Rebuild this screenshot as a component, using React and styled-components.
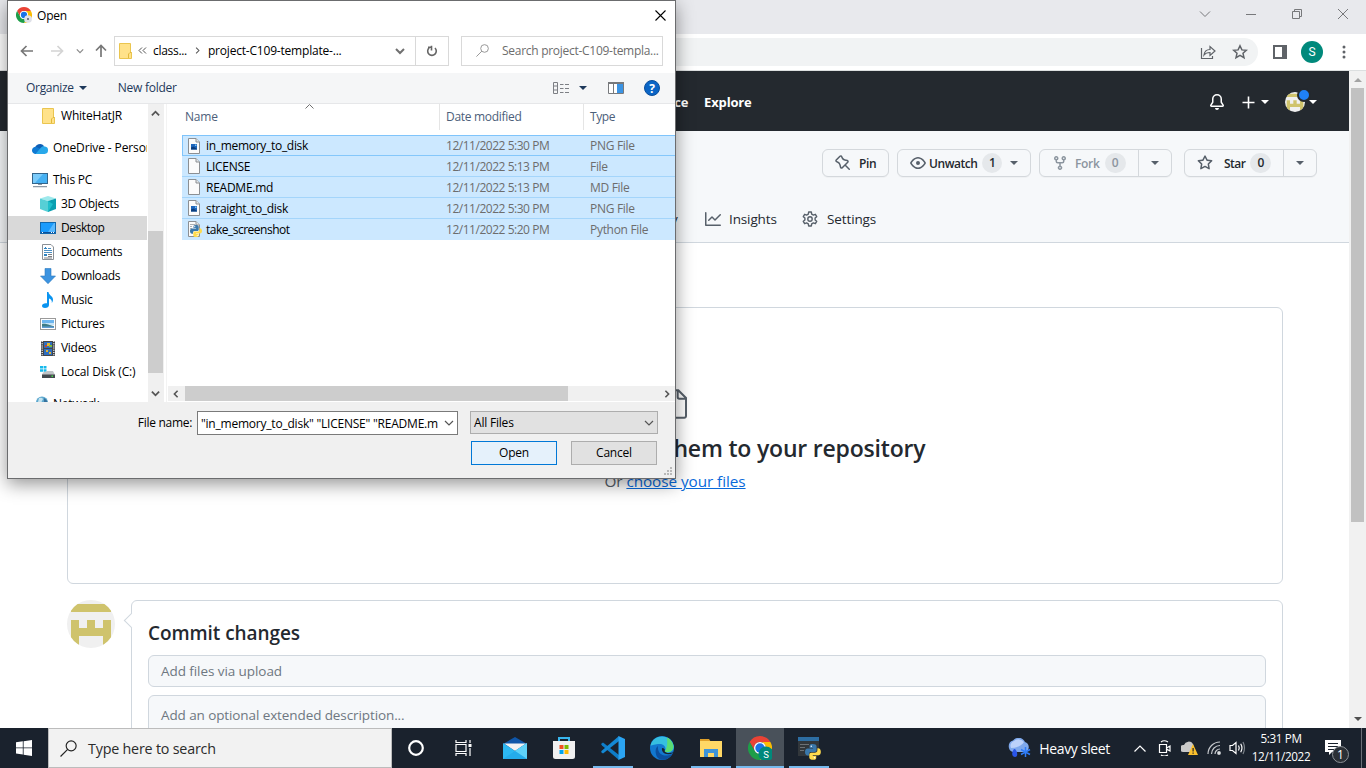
import React from 'react';
import styled, { createGlobalStyle, css } from 'styled-components';

const Global = createGlobalStyle`
  * { box-sizing: border-box; }
  html, body { margin: 0; height: 768px; overflow: hidden; background: #fff; }
  body { font-family: "Open Sans", "Noto Sans", sans-serif; font-size: 12px; color: #000; }
  svg { display: block; flex: none; }
`;

const spaced = css`
  white-space: nowrap;
  letter-spacing: ${p => p.$ls ?? -0.2}px;
`;

const Screen = styled.div`
  position: relative;
  width: 1366px;
  height: 768px;
  display: flex;
  flex-direction: column;
  overflow: hidden;
`;

/* ---------- browser ---------- */
const Browser = styled.div`
  height: 728px;
  display: flex;
  flex-direction: column;
`;
const TabStrip = styled.div`
  height: 34px;
  flex: none;
  background: #e8e9ed;
  display: flex;
  justify-content: flex-end;
  align-items: center;
  gap: 34px;
  padding: 0 17px 6px 0;
`;
const Toolbar = styled.div`
  height: 37px;
  flex: none;
  background: #fff;
  border-bottom: 1px solid #dcdfe0;
  display: flex;
  align-items: center;
  padding: 0 19px 0 100px;
`;
const Omnibox = styled.div`
  flex: 1;
  height: 28px;
  border-radius: 0 14px 14px 0;
  background: #f1f3f4;
  display: flex;
  justify-content: flex-end;
  align-items: center;
  gap: 16px;
  padding-right: 10px;
`;
const ToolbarActions = styled.div`
  width: 89px;
  display: flex;
  align-items: center;
  padding-left: 15px;
`;
const Profile = styled.div`
  width: 22px;
  height: 22px;
  margin: 0 19px 0 14px;
  border-radius: 50%;
  background: #00897b;
  color: #fff;
  font: 12px/22px Roboto, sans-serif;
  text-align: center;
`;
const Viewport = styled.div`
  flex: 1;
  min-height: 0;
  display: flex;
`;
const Page = styled.div`
  width: 1349px;
  overflow: hidden;
  background: #fff;
`;
const PageScroll = styled.div`
  width: 17px;
  background: #f1f1f1;
  display: flex;
  flex-direction: column;
  align-items: center;
  padding: 7px 0 7px 1px;
  justify-content: space-between;
`;
const PageThumb = styled.div`
  width: 13px;
  height: 434px;
  margin: 6px 1px auto 0;
  background: #c1c1c1;
`;

/* ---------- repository page ---------- */
const SiteHeader = styled.header`
  height: 60px;
  background: #24292f;
  color: #fff;
  display: flex;
  align-items: center;
  justify-content: space-between;
  padding: 2px 32px 0 609px;
`;
const SiteLinks = styled.nav`
  display: flex;
  gap: 16px;
`;
const SiteLink = styled.span`
  font-size: 13px;
  font-weight: 700;
  line-height: 20px;
  ${spaced}
`;
const SiteActions = styled.div`
  display: flex;
  align-items: center;
`;
const Caret = styled.i`
  width: 0;
  height: 0;
  border: 4px solid transparent;
  border-top-color: ${p => p.$c || '#57606a'};
  border-bottom: 0;
  margin-left: ${p => p.$ml || 0}px;
`;
const AvatarWrap = styled.div`
  position: relative;
  margin-left: 16px;
`;
const StatusDot = styled.i`
  position: absolute;
  left: 12px;
  top: -4px;
  width: 14px;
  height: 14px;
  border-radius: 50%;
  background: #1f80f5;
  border: 2px solid #24292f;
`;
const RepoHead = styled.div`
  height: 112px;
  background: #f6f8fa;
  border-bottom: 1px solid #d0d7de;
`;
const RepoActions = styled.div`
  display: flex;
  justify-content: flex-end;
  padding: 18px 32px 0 0;
`;
const RepoButton = styled.div`
  height: 28px;
  width: ${p => p.$w}px;
  margin-left: ${p => p.$ml ?? 8}px;
  border: 1px solid #d4d8dc;
  border-radius: 6px;
  background: #f6f8fa;
  box-shadow: 0 1px 0 rgba(27,31,36,.03);
  color: ${p => (p.$muted ? '#8c959f' : '#24292f')};
  display: flex;
  align-items: center;
  padding-left: 12px;
  svg { color: ${p => (p.$muted ? '#8c959f' : '#57606a')}; }
`;
const ButtonLabel = styled.span`
  font-size: 12px;
  font-weight: 600;
  margin-left: ${p => p.$ml}px;
  ${spaced}
`;
const Counter = styled.span`
  width: ${p => p.$w || 21}px;
  height: 20px;
  border-radius: 10px;
  background: #e5e8eb;
  font-size: 12px;
  font-weight: 600;
  line-height: 20px;
  text-align: center;
  margin-left: 5px;
`;
const SplitCaret = styled.div`
  margin-left: auto;
  width: 33px;
  height: 26px;
  border-left: 1px solid #d4d8dc;
  display: flex;
  align-items: center;
  justify-content: center;
`;
const RepoTabs = styled.div`
  display: flex;
  align-items: center;
  height: 48px;
  margin-top: 18px;
  padding-left: 629px;
`;
const RepoTab = styled.div`
  display: flex;
  align-items: center;
  gap: ${p => p.$gap ?? 8}px;
  width: ${p => p.$w}px;
  font-size: 13.5px;
  color: #24292f;
  ${spaced}
  svg { color: #57606a; }
`;
const DropZone = styled.div`
  margin: 64px 66px 0 67px;
  height: 277px;
  border: 1px solid #d0d7de;
  border-radius: 6px;
  display: flex;
  flex-direction: column;
  align-items: center;
  padding-top: 80px;
  color: #57606a;
`;
const DropTitle = styled.h2`
  margin: 10px 0 0;
  font-size: 23px;
  line-height: 36px;
  font-weight: 600;
  color: #24292f;
  ${spaced}
`;
const DropHint = styled.p`
  margin: 0;
  font-size: 15.3px;
  line-height: 30px;
  ${spaced}
  span { color: #0969da; text-decoration: underline; }
`;
const CommitRow = styled.div`
  display: flex;
  margin: 16px 66px 0 67px;
`;
const CommitBox = styled.div`
  position: relative;
  flex: 1;
  margin-left: 16px;
  height: 260px;
  border: 1px solid #d0d7de;
  border-radius: 6px;
  padding: 17px 16px 0;
  &::before {
    content: '';
    position: absolute;
    left: -6px;
    top: 14px;
    width: 10px;
    height: 10px;
    background: #fff;
    border-left: 1px solid #d0d7de;
    border-bottom: 1px solid #d0d7de;
    transform: rotate(45deg);
  }
`;
const CommitTitle = styled.h3`
  margin: 0 0 6px;
  font-size: 19px;
  line-height: 31px;
  font-weight: 600;
  color: #24292f;
  ${spaced}
`;
const Field = styled.div`
  height: ${p => p.$h}px;
  border: 1px solid #d0d7de;
  border-radius: 6px;
  background: #f6f8fa;
  padding: ${p => p.$pt}px 12px 0;
  margin-bottom: 8px;
  font-size: 13.5px;
  line-height: 20px;
  color: #6e7781;
  ${spaced}
`;

/* ---------- file dialog ---------- */
const Dialog = styled.div`
  position: absolute;
  left: 7px;
  top: 0;
  width: 669px;
  height: 479px;
  background: #fff;
  border: 1px solid #6b6c6e;
  box-shadow: 0 5px 17px rgba(0,0,0,.42);
  display: flex;
  flex-direction: column;
  font-size: 12px;
`;
const TitleBar = styled.div`
  height: 30px;
  display: flex;
  align-items: center;
  padding: 0 9px 2px 8px;
  ${spaced}
`;
const TitleText = styled.span`
  flex: 1;
  margin-left: 5px;
`;
const NavBar = styled.div`
  height: 42px;
  display: flex;
  align-items: center;
  padding: 0 12px 2px 12px;
`;
const NavArrows = styled.div`
  width: 94px;
  display: flex;
  align-items: center;
`;
const AddressBar = styled.div`
  width: 335px;
  height: 30px;
  border: 1px solid #d9d9d9;
  display: flex;
  align-items: center;
  padding: 0 0 1px 2px;
`;
const Crumb = styled.span`
  margin-left: ${p => p.$ml}px;
  ${spaced}
`;
const Refresh = styled.div`
  width: 33px;
  height: 28px;
  border-left: 1px solid #d9d9d9;
  display: flex;
  align-items: center;
  justify-content: center;
`;
const SearchBox = styled.div`
  width: 202px;
  height: 30px;
  margin-left: 12px;
  border: 1px solid #d9d9d9;
  display: flex;
  align-items: center;
  padding: 0 0 1px 14px;
  color: #6d6d6d;
  gap: 13px;
  ${spaced}
`;
const CommandBar = styled.div`
  height: 31px;
  background: #f5f6f7;
  border-bottom: 1px solid #e6e7e9;
  display: flex;
  align-items: center;
  padding: 0 15px 0 18px;
  color: #1e395b;
`;
const Command = styled.span`
  padding-bottom: 1px;
  margin: 0 ${p => p.$mr}px 0 ${p => p.$ml || 0}px;
  ${spaced}
`;
const DialogBody = styled.div`
  height: 298px;
  display: flex;
  overflow: hidden;
`;
const Tree = styled.div`
  width: 140px;
  overflow: hidden;
`;
const TreeItem = styled.div`
  height: 24px;
  width: 139px;
  display: flex;
  align-items: center;
  padding-left: ${p => (p.$root ? 24 : 32)}px;
  margin-top: ${p => p.$mt || 0}px;
  gap: 5px;
  overflow: hidden;
  background: ${p => (p.$on ? '#d9d9d9' : 'transparent')};
  ${spaced}
`;
const TreeLabel = styled.span`
  padding-bottom: 2px;
`;
const TreeScroll = styled.div`
  width: 16px;
  background: #f0f0f0;
  display: flex;
  flex-direction: column;
  align-items: center;
  padding: 5px 2px 4px 0;
`;
const TreeThumb = styled.div`
  width: 15px;
  height: 142px;
  margin: 113px -1px auto 0;
  background: #cdcdcd;
`;
const FileArea = styled.div`
  flex: 1;
  min-width: 0;
  margin-left: 2px;
  border-left: 1px solid #f3f3f3;
  display: flex;
  flex-direction: column;
  overflow: hidden;
`;
const Columns = styled.div`
  position: relative;
  height: 26px;
  margin: 0 0 5px 15px;
  display: flex;
  color: #4c607a;
`;
const Column = styled.div`
  width: ${p => p.$w}px;
  flex: none;
  padding-left: ${p => p.$pl}px;
  border-right: 1px solid #e5e5e5;
  line-height: 26px;
  ${spaced}
`;
const SortMark = styled.div`
  position: absolute;
  left: 123px;
  top: 0;
`;
const FileRow = styled.div`
  height: 21px;
  margin-left: 15px;
  display: flex;
  align-items: center;
  background: #cce8ff;
  border: ${p => (p.$focus ? '1px solid #7fc4fb' : '0 solid')};
  border-right: 0;
  border-bottom: 1px solid ${p => (p.$focus ? '#84c7fb' : p.$last ? '#cce8ff' : '#a4d5fb')};
  padding-left: ${p => (p.$focus ? 3 : 4)}px;
  color: #6d6d6d;
`;
const FileName = styled.span`
  width: 244px;
  flex: none;
  padding-left: 4px;
  color: #000;
  ${spaced}
`;
const FileMeta = styled.span`
  width: ${p => p.$w}px;
  flex: none;
  ${spaced}
`;
const HScroll = styled.div`
  margin: auto 0 1px 1px;
  height: 15px;
  background: #f0f0f0;
  display: flex;
  align-items: center;
  padding: 0 4px 0 4px;
`;
const HThumb = styled.div`
  width: 383px;
  height: 15px;
  margin: 0 auto 0 5px;
  background: #cdcdcd;
`;
const DialogFooter = styled.div`
  position: relative;
  flex: 1;
  background: #f0f0f0;
  padding: 9px 17px 0 0;
`;
const FooterRow = styled.div`
  display: flex;
  justify-content: flex-end;
  align-items: flex-start;
`;
const FieldName = styled.span`
  line-height: 24px;
  margin-right: 5px;
  ${spaced}
`;
const NameInput = styled.div`
  width: 261px;
  height: 24px;
  border: 1px solid #7a7a7a;
  background: #fff;
  line-height: 23px;
  padding: 0 3px 0 3px;
  display: flex;
  align-items: center;
  justify-content: space-between;
  ${spaced}
`;
const TypeSelect = styled.div`
  width: 188px;
  height: 23px;
  margin-left: 12px;
  border: 1px solid #adadad;
  background: #e1e1e1;
  padding: 0 3px 0 3px;
  display: flex;
  align-items: center;
  justify-content: space-between;
  ${spaced}
`;
const DialogButton = styled.div`
  width: 86px;
  height: 24px;
  margin: 6px 1px 0 13px;
  border: 1px solid ${p => (p.$primary ? '#0078d7' : '#adadad')};
  background: ${p => (p.$primary ? '#e5f1fb' : '#e1e1e1')};
  line-height: 22px;
  text-align: center;
  ${spaced}
`;
const Grip = styled.svg`
  position: absolute;
  right: 2px;
  bottom: 2px;
`;

/* ---------- taskbar ---------- */
const Taskbar = styled.div`
  height: 40px;
  background: #1a222d;
  display: flex;
  align-items: center;
  color: #fff;
`;
const StartButton = styled.div`
  width: 48px;
  padding-left: 16px;
`;
const TaskSearch = styled.div`
  width: 344px;
  height: 40px;
  background: #f2f2f2;
  border: 1px solid #bcbcbc;
  color: #2b2b2b;
  display: flex;
  align-items: center;
  gap: 11px;
  padding-left: 11px;
  font-size: 14.3px;
  ${spaced}
`;
const TaskApp = styled.div`
  width: ${p => p.$w || 48}px;
  height: 40px;
  display: flex;
  align-items: center;
  justify-content: center;
  background: ${p => (p.$active ? '#49515a' : 'transparent')};
  box-shadow: ${p => (p.$run ? 'inset 0 -2px #76b9ed' : 'none')};
  margin: 0 ${p => p.$mr ?? p.$mx ?? 0}px 0 ${p => p.$mx || 0}px;
`;
const Tray = styled.div`
  margin-left: auto;
  height: 40px;
  display: flex;
  align-items: center;
  padding-right: 4px;
`;
const Weather = styled.span`
  font-size: 14px;
  margin: 0 24px 0 7px;
  ${spaced}
`;
const Clock = styled.div`
  width: 60px;
  margin-left: 5px;
  padding-bottom: 2px;
  text-align: center;
  font-size: 11.7px;
  line-height: 18px;
  ${spaced}
`;
const Notice = styled.div`
  position: relative;
  margin: 0 12px 0 14px;
  padding-top: 4px;
  width: 24px;
  height: 24px;
`;
const NoticeCount = styled.span`
  position: absolute;
  left: 7px;
  top: 10px;
  width: 17px;
  height: 17px;
  border-radius: 50%;
  border: 1px solid #8d9298;
  background: #2b3036;
  font-size: 12px;
  line-height: 15px;
  text-align: center;
`;
const PeekEdge = styled.i`
  height: 40px;
  border-left: 1px solid #6a7078;
`;

/* ---------- drawings ---------- */
const octicons = {
  bell: 'M8 16a2 2 0 001.985-1.750c.017-.137-.097-.25-.235-.25h-3.500c-.138 0-.252.113-.235.25A2 2 0 008 16zM8 1.500A3.500 3.500 0 004.500 5v2.947c0 .346-.102.683-.294.97l-1.703 2.556a.018.018 0 00-.003.01l.001.006c0 .002.002.004.004.006a.017.017 0 00.006.004l.007.001h10.964l.007-.001a.016.016 0 00.006-.004.016.016 0 00.004-.006l.001-.007a.017.017 0 00-.003-.01l-1.703-2.554a1.750 1.750 0 01-.294-.97V5A3.500 3.500 0 008 1.500zM3 5a5 5 0 0110 0v2.947c0 .05.015.098.042.139l1.703 2.555A1.518 1.518 0 0113.482 13H2.518a1.518 1.518 0 01-1.263-2.360l1.703-2.554A.25.25 0 003 7.947V5z',
  star: 'M8 .25a.75.75 0 01.673.418l1.882 3.815 4.210.612a.75.75 0 01.416 1.279l-3.046 2.970.719 4.192a.75.75 0 01-1.088.791L8 12.347l-3.766 1.980a.75.75 0 01-1.088-.79l.72-4.194L.818 6.374a.75.75 0 01.416-1.280l4.210-.611L7.327.668A.75.75 0 018 .25zm0 2.445L6.615 5.500a.75.75 0 01-.564.41l-3.097.45 2.240 2.184a.75.75 0 01.216.664l-.528 3.084 2.769-1.456a.75.75 0 01.698 0l2.770 1.456-.53-3.084a.75.75 0 01.216-.664l2.240-2.183-3.096-.45a.75.75 0 01-.564-.41L8 2.694v.001z',
  fork: 'M5 3.250a.75.75 0 11-1.500 0 .75.75 0 011.500 0zm0 2.122a2.250 2.250 0 10-1.500 0v.878A2.250 2.250 0 005.750 8.500h1.500v2.128a2.251 2.251 0 101.500 0V8.500h1.500a2.250 2.250 0 002.250-2.250v-.878a2.250 2.250 0 10-1.500 0v.878a.75.75 0 01-.75.75h-4.500A.75.75 0 015 6.250v-.878zm3.750 7.378a.75.75 0 11-1.500 0 .75.75 0 011.500 0zm3-8.750a.75.75 0 100-1.500.75.75 0 000 1.500z',
  eye: 'M1.679 7.932c.412-.621 1.242-1.750 2.366-2.717C5.175 4.242 6.527 3.500 8 3.500c1.473 0 2.824.742 3.955 1.715 1.124.967 1.954 2.096 2.366 2.717a.119.119 0 010 .136c-.412.621-1.242 1.750-2.366 2.717C10.825 11.758 9.473 12.500 8 12.500c-1.473 0-2.824-.742-3.955-1.715C2.920 9.818 2.090 8.690 1.679 8.068a.119.119 0 010-.136zM8 2c-1.981 0-3.670.992-4.933 2.078C1.797 5.169.88 6.423.43 7.100a1.619 1.619 0 000 1.798c.45.678 1.367 1.932 2.637 3.024C4.329 13.008 6.019 14 8 14c1.981 0 3.670-.992 4.933-2.078 1.270-1.091 2.187-2.345 2.637-3.023a1.619 1.619 0 000-1.798c-.45-.678-1.367-1.932-2.637-3.023C11.671 2.992 9.981 2 8 2zm0 8a2 2 0 100-4 2 2 0 000 4z',
  graph: 'M1.500 1.750a.75.75 0 00-1.500 0v12.500c0 .414.336.75.75.75h14.500a.75.75 0 000-1.500H1.500V1.750zm14.280 2.530a.75.75 0 00-1.060-1.060L10 7.940 7.530 5.470a.75.75 0 00-1.060 0L3.220 8.720a.75.75 0 001.060 1.060L7 7.060l2.470 2.470a.75.75 0 001.060 0l5.250-5.250z',
  pin: 'M4.456.734a1.750 1.750 0 012.826.504l.613 1.327a3.081 3.081 0 002.084 1.707l2.454.584c1.332.317 1.800 1.972.832 2.940L11.060 10l3.720 3.720a.75.75 0 11-1.061 1.060L10 11.060l-2.204 2.205c-.968.968-2.623.5-2.940-.832l-.584-2.454a3.081 3.081 0 00-1.707-2.084l-1.327-.613a1.750 1.750 0 01-.504-2.826L4.456.734zM5.920 1.866a.25.25 0 00-.404-.072L1.794 5.516a.25.25 0 00.072.404l1.328.613A4.582 4.582 0 015.730 9.630l.584 2.454a.25.25 0 00.42.12l5.470-5.470a.25.25 0 00-.12-.42L9.630 5.730a4.581 4.581 0 01-3.098-2.537L5.920 1.866z',
};
const Octicon = ({ name }) => (
  <svg width="16" height="16" viewBox="0 0 16 16" fill="currentColor"><path fillRule="evenodd" d={octicons[name]} /></svg>
);
const gearOutline = Array.from({ length: 6 }, (_, k) => {
  const at = (r, deg) => {
    const a = ((k * 60 - 90 + deg) * Math.PI) / 180;
    return `${(8 + r * Math.cos(a)).toFixed(2)} ${(8 + r * Math.sin(a)).toFixed(2)}`;
  };
  return `${at(5.2, -19)}L${at(7.1, -11)}L${at(7.1, 11)}L${at(5.2, 19)}`;
}).join('L');
const Gear = () => (
  <svg width="16" height="16" viewBox="0 0 16 16" fill="none" stroke="currentColor" strokeWidth="1.400" strokeLinejoin="round">
    <path d={`M${gearOutline}z`} /><circle cx="8" cy="8" r="2.200" />
  </svg>
);
const Identicon = ({ size }) => (
  <svg width={size} height={size} viewBox="0 0 48 48">
    <defs><clipPath id={'av' + size}><circle cx="24" cy="24" r="24" /></clipPath></defs>
    <g clipPath={`url(#av${size})`}>
      <rect width="48" height="48" fill="#f0f0f0" />
      <path fill="#cfc36c" d="M4 4h40v8H4zM4 20h8v8h8v-8h8v8h8v-8h8v28h-8V36H12v12H4z" />
    </g>
  </svg>
);
const Chevron = ({ dir = 'down', w = 9, c = '#555', s = 1.5 }) => {
  const rot = { down: 0, up: 180, left: 90, right: -90 }[dir];
  return (
    <svg width={w} height={w} viewBox="0 0 10 10" fill="none" stroke={c} strokeWidth={s}>
      <path transform={`rotate(${rot} 5 5)`} d="M1 3l4 4 4-4" />
    </svg>
  );
};
const Triangle = ({ c = '#505050', up, ...rest }) => (
  <svg width="8" height="4" viewBox="0 0 8 4" {...rest}><path fill={c} d={up ? 'M0 4h8L4 0z' : 'M0 0h8L4 4z'} /></svg>
);
const ChromeLogo = ({ size, badge }) => (
  <svg width={size} height={size} viewBox="0 0 24 24">
    <path fill="#ea4335" d="M12 0a12 12 0 0 1 10.400 6H12a6 6 0 0 0-5.200 9L1.600 6A12 12 0 0 1 12 0z" />
    <path fill="#fbbc04" d="M22.400 6A12 12 0 0 1 12 24l5.200-9A6 6 0 0 0 12 6z" />
    <path fill="#1e9e49" d="M12 24A12 12 0 0 1 1.600 6l5.200 9a6 6 0 0 0 10.400 0z" />
    <circle cx="12" cy="12" r="6" fill="#fff" />
    <circle cx="12" cy="12" r="4.700" fill="#1a73e8" />
    {badge === 'gray' && <g><circle cx="18" cy="18" r="5.800" fill="#dfe1e8" /><circle cx="18" cy="18" r="1.600" fill="#5b6270" /></g>}
    {badge === 'S' && <g><circle cx="18" cy="18" r="7.600" fill="#00897b" /><text x="18" y="21.500" fontSize="9.500" fill="#fff" textAnchor="middle" fontFamily="Roboto, sans-serif">S</text></g>}
  </svg>
);
const Folder = () => (
  <svg width="16" height="16" viewBox="0 0 16 16">
    <path fill="#ffe28a" stroke="#eac54f" d="M2.500.500h11v9h1v6h-12z" />
    <path fill="none" stroke="#e3b93c" d="M11.500 15V11l1.500-1.500h1.500" />
  </svg>
);
const OneDrive = () => (
  <svg width="16" height="16" viewBox="0 0 16 16">
    <path fill="#0f5fb5" d="M3 9a5 5 0 0 1 9-3l-2 4-7 3z" />
    <path fill="#1079d2" d="M0 10.400a3.500 3.500 0 0 1 5.500-3L11 10l-7 4A3.600 3.600 0 0 1 0 10.400z" />
    <path fill="#28a8ea" d="M3.500 13.900L9 7.500a4 4 0 0 1 4-1 3.600 3.600 0 0 1 3 3.700 3.600 3.600 0 0 1-3.400 3.700z" />
  </svg>
);
const ThisPc = () => (
  <svg width="16" height="16" viewBox="0 0 16 16">
    <rect x=".5" y="1.500" width="15" height="10" fill="#46b1f3" stroke="#33658c" />
    <path fill="#7bcbfa" d="M1 2h10L3 11H1z" />
    <path fill="#8b98a5" d="M6 12h4v1H6zM1 14h14v1.300H1z" />
  </svg>
);
const Objects3D = () => (
  <svg width="16" height="16" viewBox="0 0 16 16">
    <path fill="#9ee9ec" d="M8 0l8 2.500L8 5 0 2.500z" />
    <path fill="#56cfd6" d="M0 2.500L8 5v11l-8-3z" />
    <path fill="#0a9fb0" d="M16 2.500L8 5v11l8-3z" />
    <path fill="#1fc0cc" d="M8 5l5 3-5 8z" />
  </svg>
);
const DesktopIcon = () => (
  <svg width="16" height="16" viewBox="0 0 16 16">
    <rect x=".5" y="2.500" width="15" height="11" fill="#1a9bfc" stroke="#1268ad" />
    <path fill="#59b9ff" d="M14 3h1v9H8z" /><path fill="#0c4f98" d="M1 12h14v1H1z" /><path fill="#fff" d="M2 12h1v1H2zM11 12h1v1h-1zM13 12h1v1h-1z" />
  </svg>
);
const DocumentIcon = () => (
  <svg width="16" height="16" viewBox="0 0 16 16">
    <path fill="#fff" stroke="#8b9096" d="M2.500.500h8.500l2.500 2.500v12.500h-11z" />
    <path stroke="#4a8fc4" d="M4 6.500h8M4 8.500h8M8 4.500h3" /><path stroke="#7b7f84" d="M8 10.500h4M8 12.500h4M4 14h8" />
    <path fill="#2f83c0" d="M5 3h1v2H5zM4 4h3v1H4zM4 10h3v2H4z" />
  </svg>
);
const DownloadIcon = () => (
  <svg width="16" height="16" viewBox="0 0 16 16"><path fill="#3b93e0" stroke="#2b7bc0" strokeWidth=".6" d="M5 .5h6V8h4.500L8 15.700.5 8H5z" /></svg>
);
const MusicIcon = () => (
  <svg width="16" height="16" viewBox="0 0 16 16"><path fill="#0a94f0" d="M7 0h1.500c.3 3.300 4.500 4 4.500 7.500 0 1.500-.5 2.500-1.200 3.500.5-3-1-4-2.800-4.600V13c0 1.800-1.700 3-4 3-1.700 0-3-.8-3-2.200 0-2 2.500-3 5-2.500z" /></svg>
);
const PictureIcon = () => (
  <svg width="16" height="16" viewBox="0 0 16 16">
    <rect x=".5" y="2.500" width="15" height="11" fill="#fff" stroke="#9a9a9a" />
    <path fill="#6cb5ee" d="M2 4h12v4H2z" /><path fill="#c6e4f7" d="M2 7h12v2H2z" /><path fill="#3e7c86" d="M2 8c4-1 6 1 12 2v2H2z" /><path fill="#5e9cd4" d="M2 10.500h12V12H2z" />
  </svg>
);
const VideoIcon = () => (
  <svg width="16" height="16" viewBox="0 0 16 16">
    <rect x="1" y="1" width="14" height="15" fill="#41464c" />
    <path stroke="#e6e6e6" strokeWidth="1.500" strokeDasharray="1 1.200" d="M2.200 1v15M13.800 1v15" />
    <path fill="#2e6ec0" d="M4 2h8v6H4zM4 9h8v6H4z" />
    <path fill="#e3b62b" d="M7 3h3v3H7zM6 10h2v2H6zM9 12h2v2H9z" /><path fill="#7ebd3b" d="M9 5h3v2H9z" /><path fill="#c4482e" d="M5 5h2v2H5z" />
  </svg>
);
const DiskIcon = () => (
  <svg width="16" height="16" viewBox="0 0 16 16">
    <path fill="#16b9ec" d="M0 2h3v2.500H0zM3.600 2H6.500v2.500H3.600zM0 5.200h3v2.500H0zM3.600 5.200H6.500v2.500H3.600z" />
    <path fill="#bfc3c6" d="M3 8.500L7.500 7H13l2 4H2z" /><path fill="#44494e" d="M2 10.500h13V14H2z" /><path fill="#43d646" d="M11.500 11.500H13v1.500h-1.500z" />
  </svg>
);
const NetworkIcon = () => (
  <svg width="16" height="16" viewBox="0 0 16 16">
    <circle cx="10" cy="6.500" r="6" fill="#5fa9cf" /><path fill="#c3e3f0" d="M7 2q3-1 4 1L9 7l-3-1z" /><path fill="#37719c" d="M12 2q4 2 3.500 6L12 9z" />
  </svg>
);
const PythonShape = () => (
  <g>
    <path fill="#3a78ab" d="M11.800 0C7 0 7 2 7 3.600V6h5.200v1H4C1.500 7 0 9 0 12s1.500 5.500 4 5.500h2V15c0-2 1.500-3 3.500-3h5c2 0 3-1.300 3-3V3.600C17.500 1 15 0 11.800 0z" />
    <path fill="#ffdb4d" d="M12.200 24c4.800 0 4.800-2 4.800-3.600V18h-5.200v-1H20c2.500 0 4-2 4-5s-1.500-5.500-4-5.500h-1.200V9c0 2.500-1.500 4.200-4 4.200H9.500c-2 0-3 1.300-3 3v4.200C6.500 23 9 24 12.200 24z" />
    <circle cx="9.500" cy="3.300" r="1.100" fill="#fff" /><circle cx="14.500" cy="20.700" r="1.100" fill="#fff" />
  </g>
);
const Sheet = ({ kind }) => (
  <svg width="16" height="16" viewBox="0 0 16 16">
    <path fill="#fbfbfb" stroke="#8b8f93" d="M2.500.500h7.500l3.500 3.500v11.500h-11z" />
    <path fill="#e5e7e9" stroke="#8b8f93" d="M10 .5V4h3.500" />
    {kind === 'png' && <g><rect x="5" y="6" width="6" height="5.500" fill="#1d66bc" /><path fill="#7fc3f2" d="M9 6.500h1.500V8H9z" /><path fill="#0b3d7d" d="M5 11.500V9.500l2.500-1 3.500 2.500v.5z" /></g>}
    {kind === 'py' && <g><path stroke="#aab0b5" d="M4 3.500h5M4 5.500h2M4 7.500h2" /><g transform="translate(4 4) scale(.5)"><PythonShape /></g></g>}
  </svg>
);
const Glass = ({ size, c, s = 1.1 }) => (
  <svg width={size} height={size} viewBox="0 0 16 16" fill="none" stroke={c} strokeWidth={s}><circle cx="10.500" cy="5.500" r="4.700" /><path d="M7.200 8.800L.5 15.500" /></svg>
);
const Arrow = ({ c, rot = 0, ...rest }) => (
  <svg width="14" height="14" viewBox="0 0 14 14" fill="none" stroke={c} strokeWidth="1.700" {...rest}><path transform={`rotate(${rot} 7 7)`} d="M13 7H1.500M6.500 2L1.500 7l5 5" /></svg>
);

const WindowControls = () => (
  <>
    <svg width="12" height="12" fill="none" stroke="#77787b"><path d="M1 3.500l5 5 5-5" /></svg>
    <svg width="12" height="12" stroke="#77787b"><path d="M1 6.500h10" /></svg>
    <svg width="12" height="12" fill="none" stroke="#77787b"><path d="M1.500 3.500h7v7h-7zM3.500 3.500v-2h7v7h-2" /></svg>
    <svg width="12" height="12" fill="none" stroke="#77787b"><path d="M1 1l10 10M11 1L1 11" /></svg>
  </>
);

const tree = [
  ['WhiteHatJR', Folder, {}],
  ['OneDrive - Person', OneDrive, { $root: true, $mt: 8, $ls: -0.12 }],
  ['This PC', ThisPc, { $root: true, $mt: 8 }],
  ['3D Objects', Objects3D, { $ls: -0.3 }],
  ['Desktop', DesktopIcon, { $on: true, $ls: -0.4 }],
  ['Documents', DocumentIcon, { $ls: -0.35 }],
  ['Downloads', DownloadIcon, { $ls: -0.4 }],
  ['Music', MusicIcon, {}],
  ['Pictures', PictureIcon, {}],
  ['Videos', VideoIcon, { $ls: -0.3 }],
  ['Local Disk (C:)', DiskIcon, { $ls: -0.15 }],
  ['Network', NetworkIcon, { $root: true, $mt: 8 }],
];
const files = [
  ['in_memory_to_disk', '12/11/2022 5:30 PM', 'PNG File', 'png', -0.3],
  ['LICENSE', '12/11/2022 5:13 PM', 'File', '', -0.3],
  ['README.md', '12/11/2022 5:13 PM', 'MD File', '', -0.25],
  ['straight_to_disk', '12/11/2022 5:30 PM', 'PNG File', 'png', -0.33],
  ['take_screenshot', '12/11/2022 5:20 PM', 'Python File', 'py', -0.5],
];

const FileDialog = () => (
  <Dialog>
    <TitleBar>
      <ChromeLogo size={16} badge="gray" />
      <TitleText>Open</TitleText>
      <svg width="11" height="11" fill="none" stroke="#000" strokeWidth="1.100"><path d="M.5.5l10 10M10.500.500l-10 10" /></svg>
    </TitleBar>
    <NavBar>
      <NavArrows>
        <Arrow c="#777" />
        <Arrow c="#d4d4d4" rot={180} style={{ marginLeft: 16 }} />
        <span style={{ marginLeft: 12 }}><Chevron w={8} c="#8a8a8a" /></span>
        <Arrow c="#777" rot={90} style={{ marginLeft: 10 }} />
      </NavArrows>
      <AddressBar>
        <Folder />
        <svg width="9" height="7" style={{ marginLeft: 5 }} fill="none" stroke="#555"><path d="M4 .5l-3 3 3 3M8 .5l-3 3 3 3" /></svg>
        <Crumb $ml={6} $ls={-0.3}>class...</Crumb>
        <span style={{ marginLeft: 7 }}><Chevron dir="right" w={7} /></span>
        <Crumb $ml={7}>project-C109-template-...</Crumb>
        <span style={{ marginLeft: 'auto', marginRight: 10 }}><Chevron w={10} c="#707070" s={2} /></span>
        <Refresh>
          <svg width="12" height="12" viewBox="0 0 12 12" fill="none" stroke="#666" strokeWidth="1.600"><path d="M3.200 2.800A4.300 4.300 0 1 0 9 3M2 2.300h4M5.500.800V5.500" /></svg>
        </Refresh>
      </AddressBar>
      <SearchBox $ls={-0.28}><Glass size={13} c="#8c8c8c" />Search project-C109-templa...</SearchBox>
    </NavBar>
    <CommandBar>
      <Command $mr={5} $ls={-0.3}>Organize</Command>
      <Triangle c="#1e395b" />
      <Command $ml={31} $mr={0} $ls={-0.25}>New folder</Command>
      <svg width="16" height="12" style={{ marginLeft: 'auto' }} fill="none" stroke="#7c7f84"><path d="M.5.500h4v11h-4zM.5 4h4M.5 8h4M7 2.500h3.500M12 2.500h4M7 6.500h3.500M12 6.500h4M7 10.500h3.500M12 10.500h4" /></svg>
      <Triangle c="#1e395b" style={{ marginLeft: 10 }} />
      <svg width="16" height="12" style={{ marginLeft: 21 }}><path fill="#fff" stroke="#77797c" d="M.5.500h15v11H.5zM5.500 2v9" /><path fill="#77797c" d="M0 0h16v2H0z" /><path fill="#3b94e4" d="M9 2h6v9H9z" /></svg>
      <svg width="16" height="16" style={{ marginLeft: 20 }}><circle cx="8" cy="8" r="7.500" fill="#0b65c6" stroke="#0a4e9c" /><text x="8" y="12.500" fill="#fff" fontSize="12" fontWeight="700" textAnchor="middle">?</text></svg>
    </CommandBar>
    <DialogBody>
      <Tree>
        {tree.map(([name, Icon, props]) => (
          <TreeItem key={name} {...props}><Icon /><TreeLabel>{name}</TreeLabel></TreeItem>
        ))}
      </Tree>
      <TreeScroll>
        <Chevron dir="up" s={2} />
        <TreeThumb />
        <Chevron s={2} />
      </TreeScroll>
      <FileArea>
        <Columns>
          <Column $w={258} $pl={3}>Name</Column>
          <Column $w={144} $pl={6} $ls={-0.3}>Date modified</Column>
          <Column $w={100} $pl={6} $ls={-0.4}>Type</Column>
          <SortMark><svg width="9" height="5" fill="none" stroke="#707070"><path d="M.5 4.500l4-4 4 4" /></svg></SortMark>
        </Columns>
        {files.map(([name, date, type, kind, ls], i) => (
          <FileRow key={name} $focus={i === 0} $last={i === 4}>
            <Sheet kind={kind} />
            <FileName $ls={ls}>{name}</FileName>
            <FileMeta $w={144} $ls={-0.47}>{date}</FileMeta>
            <FileMeta $ls={-0.3}>{type}</FileMeta>
          </FileRow>
        ))}
        <HScroll><Chevron dir="left" s={2} w={8} /><HThumb /><Chevron dir="right" s={2} w={8} /></HScroll>
      </FileArea>
    </DialogBody>
    <DialogFooter>
      <FooterRow>
        <FieldName $ls={-0.3}>File name:</FieldName>
        <NameInput $ls={-0.22}><span>"in_memory_to_disk" "LICENSE" "README.m</span><Chevron w={10} s={1.2} /></NameInput>
        <TypeSelect><span>All Files</span><Chevron w={10} s={1.2} /></TypeSelect>
      </FooterRow>
      <FooterRow>
        <DialogButton $primary>Open</DialogButton>
        <DialogButton>Cancel</DialogButton>
      </FooterRow>
      <Grip width="9" height="9"><path fill="#b9b9b9" d="M6 0h2v2H6zM3 3h2v2H3zM6 3h2v2H6zM0 6h2v2H0zM3 6h2v2H3zM6 6h2v2H6z" /></Grip>
    </DialogFooter>
  </Dialog>
);

export default function App() {
  return (
    <Screen>
      <Global />
      <Browser>
        <TabStrip><WindowControls /></TabStrip>
        <Toolbar>
          <Omnibox>
            <svg width="16" height="16" viewBox="0 0 16 16" fill="none" stroke="#5f6368" strokeWidth="1.200"><path d="M1.500 4v10.500h11V12M4 11c.5-4 3-5.500 6-5.500V2.500L15 7l-5 4.500V8.500c-2.500 0-4.500.5-6 2.500z" /></svg>
            <svg width="16" height="16" viewBox="0 0 16 16" fill="none" stroke="#5f6368" strokeWidth="1.500"><path d="M8 1.800l1.900 4.100 4.400.4-3.300 3 1 4.400L8 11.400l-4 2.300 1-4.400-3.300-3 4.400-.4z" /></svg>
          </Omnibox>
          <ToolbarActions>
            <svg width="14" height="14"><path fill="none" stroke="#5f6368" strokeWidth="2" d="M1 1h12v12H1z" /><path fill="#5f6368" d="M9 1h4v12H9z" /></svg>
            <Profile>S</Profile>
            <svg width="4" height="14" fill="#5f6368"><circle cx="2" cy="2" r="1.500" /><circle cx="2" cy="7" r="1.500" /><circle cx="2" cy="12" r="1.500" /></svg>
          </ToolbarActions>
        </Toolbar>
        <Viewport>
          <Page>
            <SiteHeader>
              <SiteLinks><SiteLink $ls={-0.25}>Marketplace</SiteLink><SiteLink $ls={-0.15}>Explore</SiteLink></SiteLinks>
              <SiteActions>
                <Octicon name="bell" />
                <svg width="16" height="16" stroke="#fff" strokeWidth="1.600" style={{ marginLeft: 15 }}><path d="M8.500 2.500v12M2.500 8.500h12" /></svg>
                <Caret $c="#fff" $ml={5} />
                <AvatarWrap><Identicon size={20} /><StatusDot /></AvatarWrap>
                <Caret $c="#fff" $ml={4} />
              </SiteActions>
            </SiteHeader>
            <RepoHead>
              <RepoActions>
                <RepoButton $w={67}><Octicon name="pin" /><ButtonLabel $ml={8} $ls={-0.35}>Pin</ButtonLabel></RepoButton>
                <RepoButton $w={134}><Octicon name="eye" /><ButtonLabel $ml={3} $ls={-0.45}>Unwatch</ButtonLabel><Counter $w={20}>1</Counter><Caret $ml={8} /></RepoButton>
                <RepoButton $w={133} $muted><Octicon name="fork" /><ButtonLabel $ml={7} $ls={-0.3}>Fork</ButtonLabel><Counter>0</Counter><SplitCaret><Caret /></SplitCaret></RepoButton>
                <RepoButton $w={133} $ml={12}><Octicon name="star" /><ButtonLabel $ml={11} $ls={-0.5}>Star</ButtonLabel><Counter>0</Counter><SplitCaret><Caret /></SplitCaret></RepoButton>
              </RepoActions>
              <RepoTabs>
                <RepoTab $w={76}>Security</RepoTab>
                <RepoTab $w={97} $ls={-0.12}><Octicon name="graph" />Insights</RepoTab>
                <RepoTab $w={90} $gap={9} $ls={-0.12}><Gear />Settings</RepoTab>
              </RepoTabs>
            </RepoHead>
            <DropZone>
              <svg width="32" height="32" viewBox="0 0 24 24" fill="none" stroke="currentColor" strokeWidth="1.500"><path d="M5 1.750h9.500L20.250 7.500V21a1.250 1.250 0 0 1-1.250 1.250H5A1.250 1.250 0 0 1 3.750 21V3A1.250 1.250 0 0 1 5 1.750zM14 2v4.750c0 .7.500 1.250 1.250 1.250H20" /></svg>
              <DropTitle>Drag files here to add them to your repository</DropTitle>
              <DropHint $ls={-0.06}>Or <span>choose your files</span></DropHint>
            </DropZone>
            <CommitRow>
              <Identicon size={48} />
              <CommitBox>
                <CommitTitle $ls={-0.07}>Commit changes</CommitTitle>
                <Field $h={32} $pt={5} $ls={-0.07}>Add files via upload</Field>
                <Field $h={100} $pt={9} $ls={-0.1}>Add an optional extended description...</Field>
              </CommitBox>
            </CommitRow>
          </Page>
          <PageScroll>
            <Triangle up c="#a3a3a3" />
            <PageThumb />
            <Triangle />
          </PageScroll>
        </Viewport>
      </Browser>
      <FileDialog />
      <Taskbar>
        <StartButton><svg width="16" height="16" fill="#fff"><path d="M0 2.300L6.800 1.300v6.200H0zM7.600 1.200L16 0v7.500H7.600zM0 8.300h6.800v6.200L0 13.600zM7.600 8.300H16V16l-8.400-1.200z" /></svg></StartButton>
        <TaskSearch><Glass size={17} c="#222" />Type here to search</TaskSearch>
        <TaskApp><svg width="18" height="18"><circle cx="9" cy="9" r="6.800" fill="none" stroke="#fff" strokeWidth="2.200" /></svg></TaskApp>
        <TaskApp $w={48}><svg width="18" height="16" fill="none" stroke="#fff" strokeWidth="1.200"><path d="M1 0v2.500h10V0M1 16v-2.500h10V16M1 4.500h10v7H1zM15 0v3M15 8v8" /><path fill="#fff" stroke="none" d="M13.500 4h3v3h-3z" /></svg></TaskApp>
        <TaskApp $w={54}><svg width="24" height="22"><path fill="#0f56a8" d="M0 7l12-7 12 7v6H0z" /><path fill="#f2f2f2" d="M1 6.500h22L12 14z" /><path fill="#2cb8f2" d="M0 6l12 8L24 6v16H0z" /><path fill="#5fd2f8" d="M12 14L24 6v16z" /><path fill="#1c9fe4" d="M12 14l12 8H0z" opacity=".5" /></svg></TaskApp>
        <TaskApp $w={43}><svg width="24" height="24"><path fill="none" stroke="#38b6ee" strokeWidth="2" d="M7 6V2h10v4" /><path fill="#f0f0f0" d="M1 5h22v15.500a2.500 2.500 0 0 1-2.500 2.500h-17A2.500 2.500 0 0 1 1 20.500z" /><path fill="#f25022" d="M7.500 9h4v4h-4z" /><path fill="#7fba00" d="M12.500 9h4v4h-4z" /><path fill="#00a4ef" d="M7.500 14h4v4h-4z" /><path fill="#ffb900" d="M12.500 14h4v4h-4z" /></svg></TaskApp>
        <TaskApp $w={40} $run $mx={8}><svg width="24" height="24"><path fill="#0e7dc8" d="M0 8l2-1.500L18 19v5L1 9.500z" /><path fill="#1489d4" d="M0 16l2 1.500L18 5V0L1 14.500z" /><path fill="#2ba4f2" d="M17.500 0L24 3v18l-6.500 3z" /></svg></TaskApp>
        <TaskApp $w={42}><svg width="24" height="24" viewBox="0 0 24 24"><circle cx="12" cy="12" r="12" fill="#1278cf" /><path fill="#36bfe0" d="M.5 9.500C3-2 20-3 23.500 9c1.500 6-4 8.500-9 7 2-2 1.500-8-5-8C5 8 1 10 .5 9.500z" /><path fill="#5bdc72" d="M17 1.500c6 3 8 10 5 13-2 2-6 2-7.500 1 3-3 3-9 2.500-14z" /><path fill="#0b4f9e" d="M8 10c-1 8 6 12 14 8-3 6-11 8-15 3-2-4-2-9 1-11z" /><path fill="#1a232e" d="M12 12c-1 5 5 8 11 5l1-1c-4 2-9 1-9.500-1 1-1 0-3-2.500-3z" /></svg></TaskApp>
        <TaskApp $w={40} $run $mx={8} $mr={5}><svg width="22" height="20"><path fill="#e0a12a" d="M0 1h9l2 3H0z" /><path fill="#ffd866" d="M0 3h22v16H0z" /><path fill="#3e94d9" d="M4 11h14v8h-4v-4H8v4H4z" /></svg></TaskApp>
        <TaskApp $w={48} $run $active><ChromeLogo size={24} badge="S" /></TaskApp>
        <TaskApp $w={40} $run $mx={5}><svg width="24" height="24"><rect x="1" y="1" width="21" height="19" fill="#32373b" /><path fill="#2d6ea3" d="M1 1h21v4H1z" /><path stroke="#6c7175" d="M3 8.500h9M3 11.500h5M3 14.500h4" /><g transform="translate(8 8) scale(.66)"><PythonShape /></g></svg></TaskApp>
        <Tray>
          <svg width="25" height="20"><path fill="#7fa9ec" d="M6 14a6 6 0 0 1 0-11.500A7 7 0 0 1 18 4a5.500 5.500 0 0 1 1 10z" /><path fill="#bcd2fa" d="M4 10a5 5 0 0 1 3-7 7 7 0 0 1 10 1c-2 4-8 6-13 6z" /><path fill="#2a55e8" d="M8 11c3 3 3 8 0 8s-4-4-1-8z" /><path stroke="#2f7dfa" strokeWidth="1.500" d="M18.500 9v10M14 11.500l9 5M23 11.500l-9 5" /></svg>
          <Weather $ls={-0.35}>Heavy sleet</Weather>
          <svg width="12" height="7" fill="none" stroke="#fff" strokeWidth="1.200"><path d="M.5 6.500L6 1l5.500 5.500" /></svg>
          <svg width="14" height="16" style={{ marginLeft: 12 }} fill="none" stroke="#fff" strokeWidth="1.200"><path d="M1.500 4.500h7v8h-7zM8.500 8l3.500-2v5l-3.500-2M3 2q3-2.500 7 0M3 15q3 2 7 0" /></svg>
          <svg width="18" height="16" style={{ marginLeft: 9 }}><path fill="#c9c9c9" d="M2 12a3.500 3.500 0 0 1 1-7 5 5 0 0 1 9-1l2 8z" /><path fill="#fbc02d" d="M12 4l5 11H7z" /><path fill="#222" d="M11.500 8h1.200v3.500h-1.200zM11.500 12.500h1.200v1.200h-1.200z" /></svg>
          <svg width="14" height="14" style={{ marginLeft: 8 }} fill="none" stroke="#c7cace" strokeWidth="1.200"><path d="M1 13A12 12 0 0 1 13 1M4.500 13A8.500 8.500 0 0 1 13 4.500M8 13a5 5 0 0 1 5-5" /><circle cx="12" cy="12" r="1.300" fill="#fff" /></svg>
          <svg width="17" height="14" style={{ marginLeft: 8 }} fill="none" stroke="#fff" strokeWidth="1.200"><path d="M1 4.500h2.500L7 1.500v11L3.500 9.500H1z" /><path d="M9.500 4.500q1.500 2.500 0 5M11.700 2.800q2.500 4.200 0 8.400" /><path stroke="#7e848b" d="M14 1q3 6 0 12" /></svg>
          <Clock $ls={-0.35}>5:31 PM<br />12/11/2022</Clock>
          <Notice><svg width="17" height="16"><path fill="#fff" d="M0 0h16v12H7l-3 3v-3H0z" /><path stroke="#1a222d" d="M3 3.500h10M3 6.500h10M3 9.500h6" /></svg><NoticeCount>1</NoticeCount></Notice>
          <PeekEdge />
        </Tray>
      </Taskbar>
    </Screen>
  );
}
